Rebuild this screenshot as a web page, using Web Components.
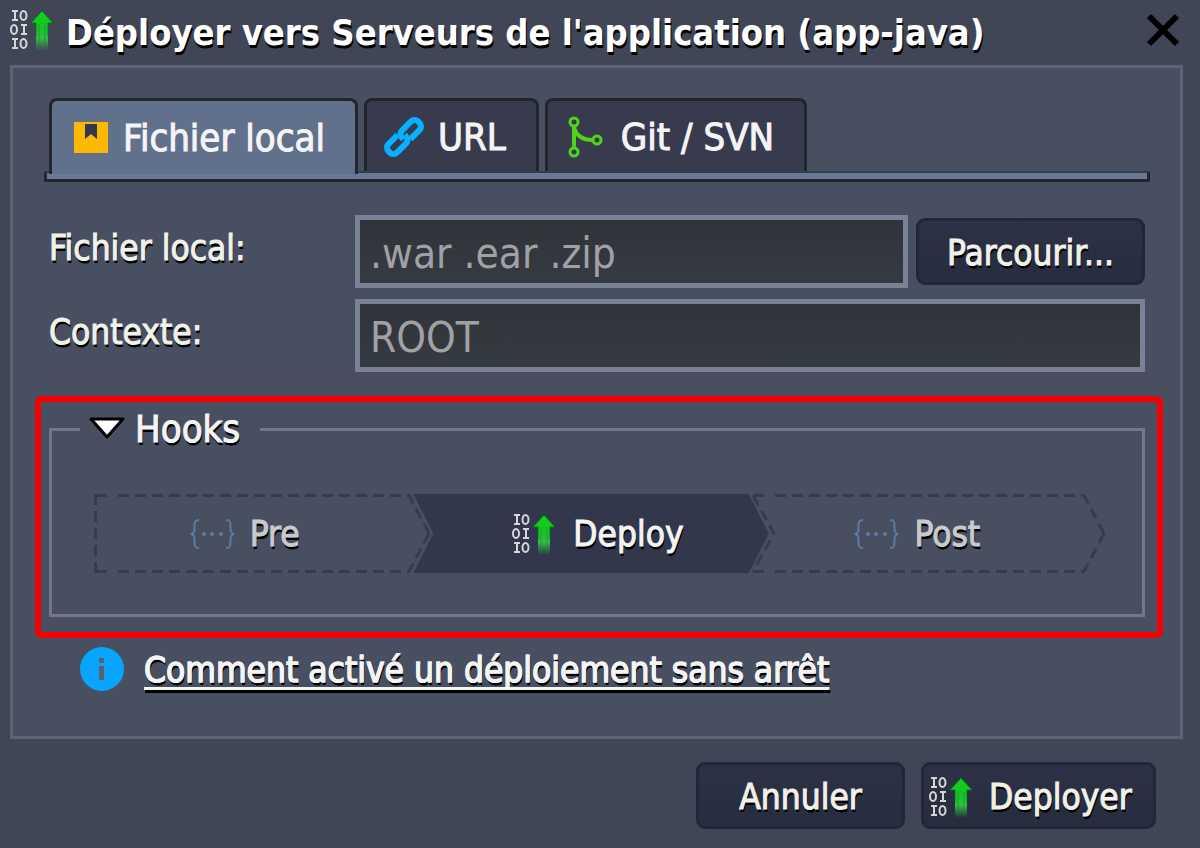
<!DOCTYPE html>
<html lang="fr">
<head>
<meta charset="utf-8">
<meta name="viewport" content="width=device-width, initial-scale=1">
<title>Déployer vers Serveurs de l'application</title>
<style>
  html { background: #404656; }
  body {
    margin: 0;
    color: #f4f4f2;
    font-family: "DejaVu Sans Condensed", "DejaVu Sans", "Noto Sans", sans-serif;
    --panel: #474f61;
    --size-title: 36px;
    --size-text: 35px;
    --size-tab: 38px;
    --size-input: 42px;
  }
</style>
</head>
<body>
<deploy-dialog></deploy-dialog>

<script>
class BaseElement extends HTMLElement {
  constructor() {
    super();
    this.attachShadow({ mode: 'open', delegatesFocus: this.constructor.focusable === true });
    this.shadowRoot.innerHTML = this.render();
  }
  render() { return ''; }
}

/* Binary digits with a green upward arrow */
class DeployIcon extends BaseElement {
  render() {
    return `
    <style>
      :host { display: block; flex: none; width: 46px; height: 42px; }
      svg { display: block; width: 100%; height: 100%; }
    </style>
    <svg viewBox="2 0 46 42" aria-hidden="true">
      <defs>
        <linearGradient id="g" x1="0" y1="0" x2="0" y2="1">
          <stop offset="0" stop-color="#12d41c"/>
          <stop offset=".4" stop-color="#16c322"/>
          <stop offset=".7" stop-color="#35bd45"/>
          <stop offset="1" stop-color="#35bd45" stop-opacity="0"/>
        </linearGradient>
      </defs>
      <g fill="none" stroke="#d5d6da" stroke-width="2">
        <path d="M4 2h6M7 2v9M4 11h6M4 30h6M7 30v9M4 39h6M13 16h6M16 16v9M13 25h6"/>
        <ellipse cx="15.500" cy="6.500" rx="3" ry="4.500"/>
        <ellipse cx="6" cy="20.500" rx="3" ry="4.500"/>
        <ellipse cx="15.500" cy="34.500" rx="3" ry="4.500"/>
      </g>
      <path d="M34 2L45 14H40V41H28V14H23Z" fill="url(#g)"/>
      <path d="M31 16V41M37 16V41" stroke="#0f8a2c" stroke-opacity=".3" stroke-width="2"/>
      <path d="M34 2L45 14H40V27M28 27V14H23L34 2" fill="none" stroke="#0a6a22" stroke-opacity=".8" stroke-width="1"/>
    </svg>`;
  }
}
customElements.define('deploy-icon', DeployIcon);

class BookmarkIcon extends BaseElement {
  render() {
    return `
    <style>:host { display: block; flex: none; } svg { display: block; }</style>
    <svg width="36" height="32" viewBox="0 0 36 32" aria-hidden="true">
      <rect x="1" width="34" height="31" fill="#fdb900"/>
      <path d="M12 2H24V17L18 12L12 17Z" fill="#2f3a4f"/>
    </svg>`;
  }
}
customElements.define('bookmark-icon', BookmarkIcon);

class LinkIcon extends BaseElement {
  render() {
    return `
    <style>:host { display: block; flex: none; } svg { display: block; overflow: visible; }</style>
    <svg width="40" height="40" viewBox="0 0 40 40" aria-hidden="true">
      <g transform="rotate(-45 20 20)" fill="none" stroke="#06b1ff" stroke-width="6">
        <path d="M17 14H4A5 5 0 0 0 -1 19V21A5 5 0 0 0 4 26H17A5 5 0 0 0 22 21V19"/>
        <path d="M23 26H36A5 5 0 0 0 41 21V19A5 5 0 0 0 36 14H23A5 5 0 0 0 18 19V21"/>
      </g>
    </svg>`;
  }
}
customElements.define('link-icon', LinkIcon);

class BranchIcon extends BaseElement {
  render() {
    return `
    <style>:host { display: block; flex: none; } svg { display: block; }</style>
    <svg width="42" height="44" viewBox="-2 0 42 44" aria-hidden="true">
      <g fill="none" stroke="#4fd31c" stroke-width="3">
        <circle cx="7" cy="7" r="4"/><circle cx="7" cy="37" r="4"/><circle cx="30" cy="25" r="4"/>
      </g>
      <g fill="none" stroke="#4fd31c" stroke-width="4">
        <path d="M7 11V33M7 12C9 21 15 25 26 25"/>
      </g>
    </svg>`;
  }
}
customElements.define('branch-icon', BranchIcon);

class BracesIcon extends BaseElement {
  render() {
    return `
    <style>:host { display: block; flex: none; } svg { display: block; }</style>
    <svg width="45" height="32" viewBox="0 0 45 32" aria-hidden="true">
      <g fill="none" stroke="#5a7ba6" stroke-width="2">
        <path d="M9 2C5 2 4.500 4 4.500 8C4.500 12 5 15 1 16C5 17 4.500 20 4.500 24C4.500 28 5 30 9 30"/>
        <path d="M36 2C40 2 40.500 4 40.500 8C40.500 12 40 15 44 16C40 17 40.500 20 40.500 24C40.500 28 40 30 36 30"/>
      </g>
      <g fill="#5a7ba6"><circle cx="14" cy="16" r="2"/><circle cx="22" cy="16" r="2"/><circle cx="31" cy="16" r="2"/></g>
    </svg>`;
  }
}
customElements.define('braces-icon', BracesIcon);

class InfoIcon extends BaseElement {
  render() {
    return `
    <style>:host { display: block; flex: none; } svg { display: block; }</style>
    <svg width="46" height="46" viewBox="0 0 46 46" aria-hidden="true">
      <circle cx="23" cy="23" r="22" fill="#08a5ff"/>
      <path d="M20 12h5v5h-5zM20 20h5v14h-5z" fill="#5b6070"/>
    </svg>`;
  }
}
customElements.define('info-icon', InfoIcon);

class UiButton extends BaseElement {
  static focusable = true;
  render() {
    return `
    <style>
      :host { display: block; flex: none; }
      button {
        box-sizing: border-box; width: 100%; height: 67px; margin: 0;
        padding: 2px var(--button-pad, 20px) 0;
        display: flex; align-items: center; justify-content: var(--button-justify, center); gap: 14px;
        border: 3px solid #22263a; border-radius: 9px;
        background: linear-gradient(#2d3146, #262d3d);
        color: #f1f1ea; font: inherit; font-size: var(--size-text); line-height: 44px;
        -webkit-text-stroke: 1px #f1f1ea;
        text-shadow: 1px 3px 0 #000; cursor: pointer; white-space: nowrap;
      }
    </style>
    <button type="button"><slot name="icon"></slot><span><slot></slot></span></button>`;
  }
}
customElements.define('ui-button', UiButton);

class UiTab extends BaseElement {
  static focusable = true;
  static observedAttributes = ['selected'];
  attributeChangedCallback() {
    this.shadowRoot.querySelector('button').setAttribute('aria-selected', this.hasAttribute('selected'));
  }
  render() {
    return `
    <style>
      :host { display: block; }
      button {
        box-sizing: border-box; width: 100%; height: 73px; margin: 0; padding: 2px 30px 0 17px;
        display: flex; align-items: center; gap: 14px;
        border: 3px solid #22252b; border-bottom: 0; border-radius: 8px 8px 0 0;
        background: #373b4d; color: #f4f4f6; font: inherit;
        font-size: var(--size-tab); line-height: 48px; white-space: nowrap; cursor: pointer;
        -webkit-text-stroke: 1px #f4f4f6;
      }
      :host([selected]) { position: relative; z-index: 1; }
      :host([selected]) button { height: 76px; padding: 0 30px 0 21px; background: #61718b; }
    </style>
    <button type="button" role="tab" aria-selected="false"><slot name="icon"></slot><span><slot></slot></span></button>`;
  }
}
customElements.define('ui-tab', UiTab);

class TabBar extends BaseElement {
  render() {
    return `
    <style>
      :host { display: block; margin: 0 -5px; }
      .tabs { display: flex; gap: 6px; height: 73px; padding: 0 5px; }
      .rail {
        box-sizing: border-box; height: 11px; background: #6a7a96;
        border: 3px solid #22252b; border-top: 2px solid #333d50; border-radius: 2px;
      }
    </style>
    <div class="tabs" role="tablist"><slot></slot></div>
    <div class="rail"></div>`;
  }
}
customElements.define('tab-bar', TabBar);

class FormField extends BaseElement {
  connectedCallback() {
    this.shadowRoot.querySelector('label').textContent = this.getAttribute('label');
    this.shadowRoot.querySelector('input').placeholder = this.getAttribute('placeholder');
  }
  render() {
    return `
    <style>
      :host { display: grid; grid-template-columns: 298px minmax(0, 1fr) auto; column-gap: 8px; align-items: center; }
      label {
        padding-bottom: 8px; color: #f1f1ea; font-size: var(--size-text); line-height: 44px;
        -webkit-text-stroke: 1px #f1f1ea; text-shadow: 1px 3px 0 #000; white-space: nowrap;
      }
      input {
        box-sizing: border-box; width: 100%; height: 73px; margin: 0; padding: 4px 10px 0;
        border: 5px solid #7a8296; border-radius: 0; background: linear-gradient(#30333a, #363a41);
        color: #a0a1a4; font: inherit; font-size: var(--size-input); outline: none;
      }
      input::placeholder { color: #a0a1a4; opacity: 1; }
      :host([wide]) input { grid-column: 2 / 4; }
    </style>
    <label for="field"></label>
    <input id="field" type="text">
    <slot></slot>`;
  }
}
customElements.define('form-field', FormField);

/* One arrow-shaped stage; dashed when idle, filled when active */
class HookStep extends BaseElement {
  render() {
    return `
    <style>
      :host { display: flex; height: 79px; min-width: 0; }
      .cap { flex: none; display: block; height: 79px; fill: none; stroke: #343c4e; stroke-width: 3; stroke-dasharray: 11 6; }
      .start, .end { width: 24px; }
      .body {
        flex: 1; min-width: 0; display: flex; align-items: center; justify-content: center; gap: 15px;
        padding: 0 var(--after, 0px) 0 var(--before, 0px);
        color: #c9cacd; font-size: var(--size-text); line-height: 44px; text-shadow: 1px 3px 0 #000;
        -webkit-text-stroke: 1px #c9cacd;
        background:
          repeating-linear-gradient(90deg, #343c4e 0 11px, transparent 11px 17px) 0 0 / 100% 3px no-repeat,
          repeating-linear-gradient(90deg, #343c4e 0 11px, transparent 11px 17px) 0 100% / 100% 3px no-repeat;
      }
      :host([active]) { background: #32374b; clip-path: polygon(0 0, calc(100% - 20px) 0, 100% 50%, calc(100% - 20px) 100%, 0 100%, 20px 50%); }
      :host([active]) .cap { visibility: hidden; }
      :host([active]) .body { background: none; color: #f4f4f4; -webkit-text-stroke-color: #f4f4f4; }
      .flat, :host([first]) .notch { display: none; }
      :host([first]) .flat { display: block; }
    </style>
    <svg class="cap start flat" viewBox="0 0 24 79"><path d="M1.500 1.500H18M1.500 77.500H18M1.500 0V79"/></svg>
    <svg class="cap start notch" viewBox="0 0 24 79"><path d="M2 1.500L23 39.500L2 77.500M2 1.500H18M2 77.500H18"/></svg>
    <div class="body"><slot name="icon"></slot><span><slot></slot></span></div>
    <svg class="cap end" viewBox="0 0 24 79"><path d="M0 1.500H2L22 39.500M0 77.500H2L22 39.500"/></svg>`;
  }
}
customElements.define('hook-step', HookStep);

class HooksGroup extends BaseElement {
  render() {
    return `
    <style>
      :host { display: block; margin: 0 -18px 0 -14px; border: 6px solid #f60000; border-radius: 6px; padding: 3px 12px 15px 8px; }
      fieldset { min-width: 0; margin: 0; border: 3px solid #707889; padding: 41px 36px 41px 42px; }
      legend { margin-left: -14px; padding: 0 20px 0 8px; color: #f4f4f4; }
      button {
        display: flex; align-items: center; gap: 9px; margin: 0; padding: 0; border: 0; background: none;
        color: inherit; font: inherit; font-size: var(--size-tab); line-height: 48px; cursor: pointer;
        -webkit-text-stroke: 1px #f4f4f4; text-shadow: 1px 3px 0 #000;
      }
      svg { display: block; width: 38px; height: 32px; }
      .steps { display: grid; grid-template-columns: repeat(3, 1fr); }
      ::slotted(*) { margin-left: -18px; }
      ::slotted([first]) { margin-left: 0; }
    </style>
    <fieldset>
      <legend><button type="button" aria-expanded="true">
        <svg viewBox="0 0 38 32" aria-hidden="true"><path d="M3 6H35L19 24Z" fill="#fff" stroke="#000" stroke-width="3" stroke-linejoin="round"/></svg>
        <span>Hooks</span></button></legend>
      <div class="steps"><slot></slot></div>
    </fieldset>`;
  }
}
customElements.define('hooks-group', HooksGroup);

class DeployDialog extends BaseElement {
  render() {
    return `
    <style>
      :host { display: block; padding: 0 17px 0 10px; }
      header { display: flex; align-items: center; height: 65px; gap: 10px; }
      h1 {
        flex: 1; min-width: 0; margin: 0; color: #fff; font-size: var(--size-title); line-height: 44px; font-weight: 700;
        text-shadow: 1px 3px 0 #000; white-space: nowrap;
      }
      header deploy-icon { margin-bottom: 6px; }
      .close { margin: 0; padding: 0 3px 5px; border: 0; background: none; cursor: pointer; }
      .close svg { display: block; }
      main { border: 3px solid #5f6475; background: var(--panel); padding: 30px 35px 44px 36px; }
      .fields { display: grid; gap: 11px; padding: 33px 0 24px; }
      .file { width: 229px; }
      .help { display: flex; align-items: center; gap: 19px; padding: 8px 0 0 30px; }
      a {
        padding-top: 2px; color: #f4f4f4; font-size: var(--size-text); line-height: 44px; white-space: nowrap;
        -webkit-text-stroke: 1px #f4f4f4; text-shadow: 1px 3px 0 #000;
        text-decoration: underline 3px; text-underline-offset: 5px; text-decoration-skip-ink: none;
      }
      footer { display: flex; justify-content: flex-end; gap: 16px; padding: 23px 27px 20px 0; }
      .cancel { width: 209px; }
      .go { width: 235px; --button-pad: 5px; --button-justify: flex-start; }
    </style>
    <header>
      <deploy-icon></deploy-icon>
      <h1>Déployer vers Serveurs de l'application (app-java)</h1>
      <button class="close" type="button" aria-label="Fermer">
        <svg width="34" height="34" viewBox="0 0 34 34"><path d="M3 3L31 31M31 3L3 31" fill="none" stroke="#000" stroke-width="6"/></svg>
      </button>
    </header>
    <main>
      <tab-bar>
        <ui-tab selected><bookmark-icon slot="icon"></bookmark-icon>Fichier local</ui-tab>
        <ui-tab><link-icon slot="icon"></link-icon>URL</ui-tab>
        <ui-tab><branch-icon slot="icon"></branch-icon>Git / SVN</ui-tab>
      </tab-bar>
      <div class="fields">
        <form-field label="Fichier local:" placeholder=".war .ear .zip"><ui-button class="file">Parcourir...</ui-button></form-field>
        <form-field wide label="Contexte:" placeholder="ROOT"></form-field>
      </div>
      <hooks-group>
        <hook-step first style="--after:36px"><braces-icon slot="icon"></braces-icon>Pre</hook-step>
        <hook-step active style="--before:14px"><deploy-icon slot="icon"></deploy-icon>Deploy</hook-step>
        <hook-step style="--after:22px"><braces-icon slot="icon"></braces-icon>Post</hook-step>
      </hooks-group>
      <div class="help"><info-icon></info-icon><a href="#">Comment activé un déploiement sans arrêt</a></div>
    </main>
    <footer>
      <ui-button class="cancel">Annuler</ui-button>
      <ui-button class="go"><deploy-icon slot="icon"></deploy-icon>Deployer</ui-button>
    </footer>`;
  }
}
customElements.define('deploy-dialog', DeployDialog);
</script>
</body>
</html>
